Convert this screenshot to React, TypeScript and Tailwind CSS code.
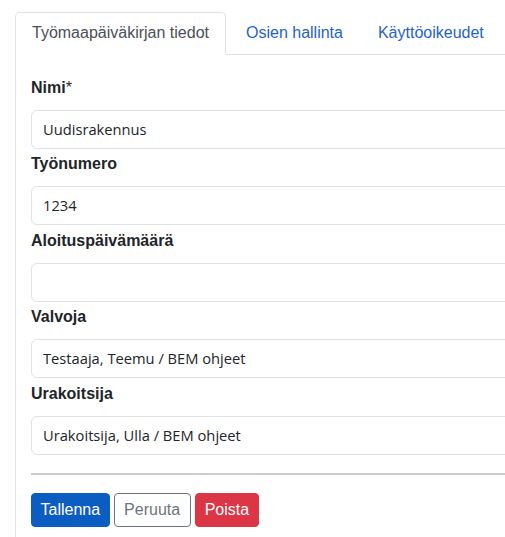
import React from "react";

const fields = [
  { label: "Nimi", required: true, value: "Uudisrakennus" },
  { label: "Työnumero", value: "1234" },
  { label: "Aloituspäivämäärä", value: "" },
  { label: "Valvoja", value: "Testaaja, Teemu / BEM ohjeet" },
  { label: "Urakoitsija", value: "Urakoitsija, Ulla / BEM ohjeet" },
];

export default function App() {
  return (
    <div className="w-[505px] h-[537px] overflow-hidden bg-white font-['Liberation_Sans',Arial,sans-serif] text-[#212529]">
      <div className="w-[640px] pl-[15px] pt-[12px]">
        {/* Tabs */}
        <div className="flex border-b border-[#dee2e6] text-[16px] leading-[24px]">
          <div className="-mb-px px-[16px] py-[8px] rounded-t-[5px] border border-[#dee2e6] border-b-white bg-white text-[#495057]">
            Työmaapäiväkirjan tiedot
          </div>
          <div className="pl-[19px] pr-[16px] py-[8px] border border-transparent text-[#1f63c6]">Osien hallinta</div>
          <div className="pl-[17px] pr-[16px] py-[8px] border border-transparent text-[#1f63c6]">Käyttöoikeudet</div>
        </div>

        {/* Content */}
        <div className="border-l border-[#dee2e6] pl-[15px] pt-[17px] pb-10">
          {fields.map((f) => (
            <div key={f.label}>
              <div className="mt-[3.5px] mb-[10px] text-[16px] leading-[24px] font-bold text-[#212529]">
                {f.label}
                {f.required && <span className="font-normal">*</span>}
              </div>
              <div className="h-[39px] rounded-[6px] border border-[#dee2e6] px-[11px] flex items-center font-['Open_Sans',sans-serif] text-[14.7px] text-[#212529]">
                {f.value}
              </div>
            </div>
          ))}

          <div className="mt-[18px] mb-[18px] h-[2px] bg-[#cccccc]" />

          <div className="flex gap-[4px] text-[16px] leading-[24px]">
            <button className="px-[8.5px] py-[4px] rounded-[4px] border border-[#0c5dc2] bg-[#0c5dc2] text-white">Tallenna</button>
            <button className="px-[9.5px] py-[4px] rounded-[4px] border border-[#6c757d] bg-white text-[#6c757d]">Peruuta</button>
            <button className="px-[9px] py-[4px] rounded-[4px] border border-[#dc3545] bg-[#dc3545] text-white">Poista</button>
          </div>
        </div>
      </div>
    </div>
  );
}
